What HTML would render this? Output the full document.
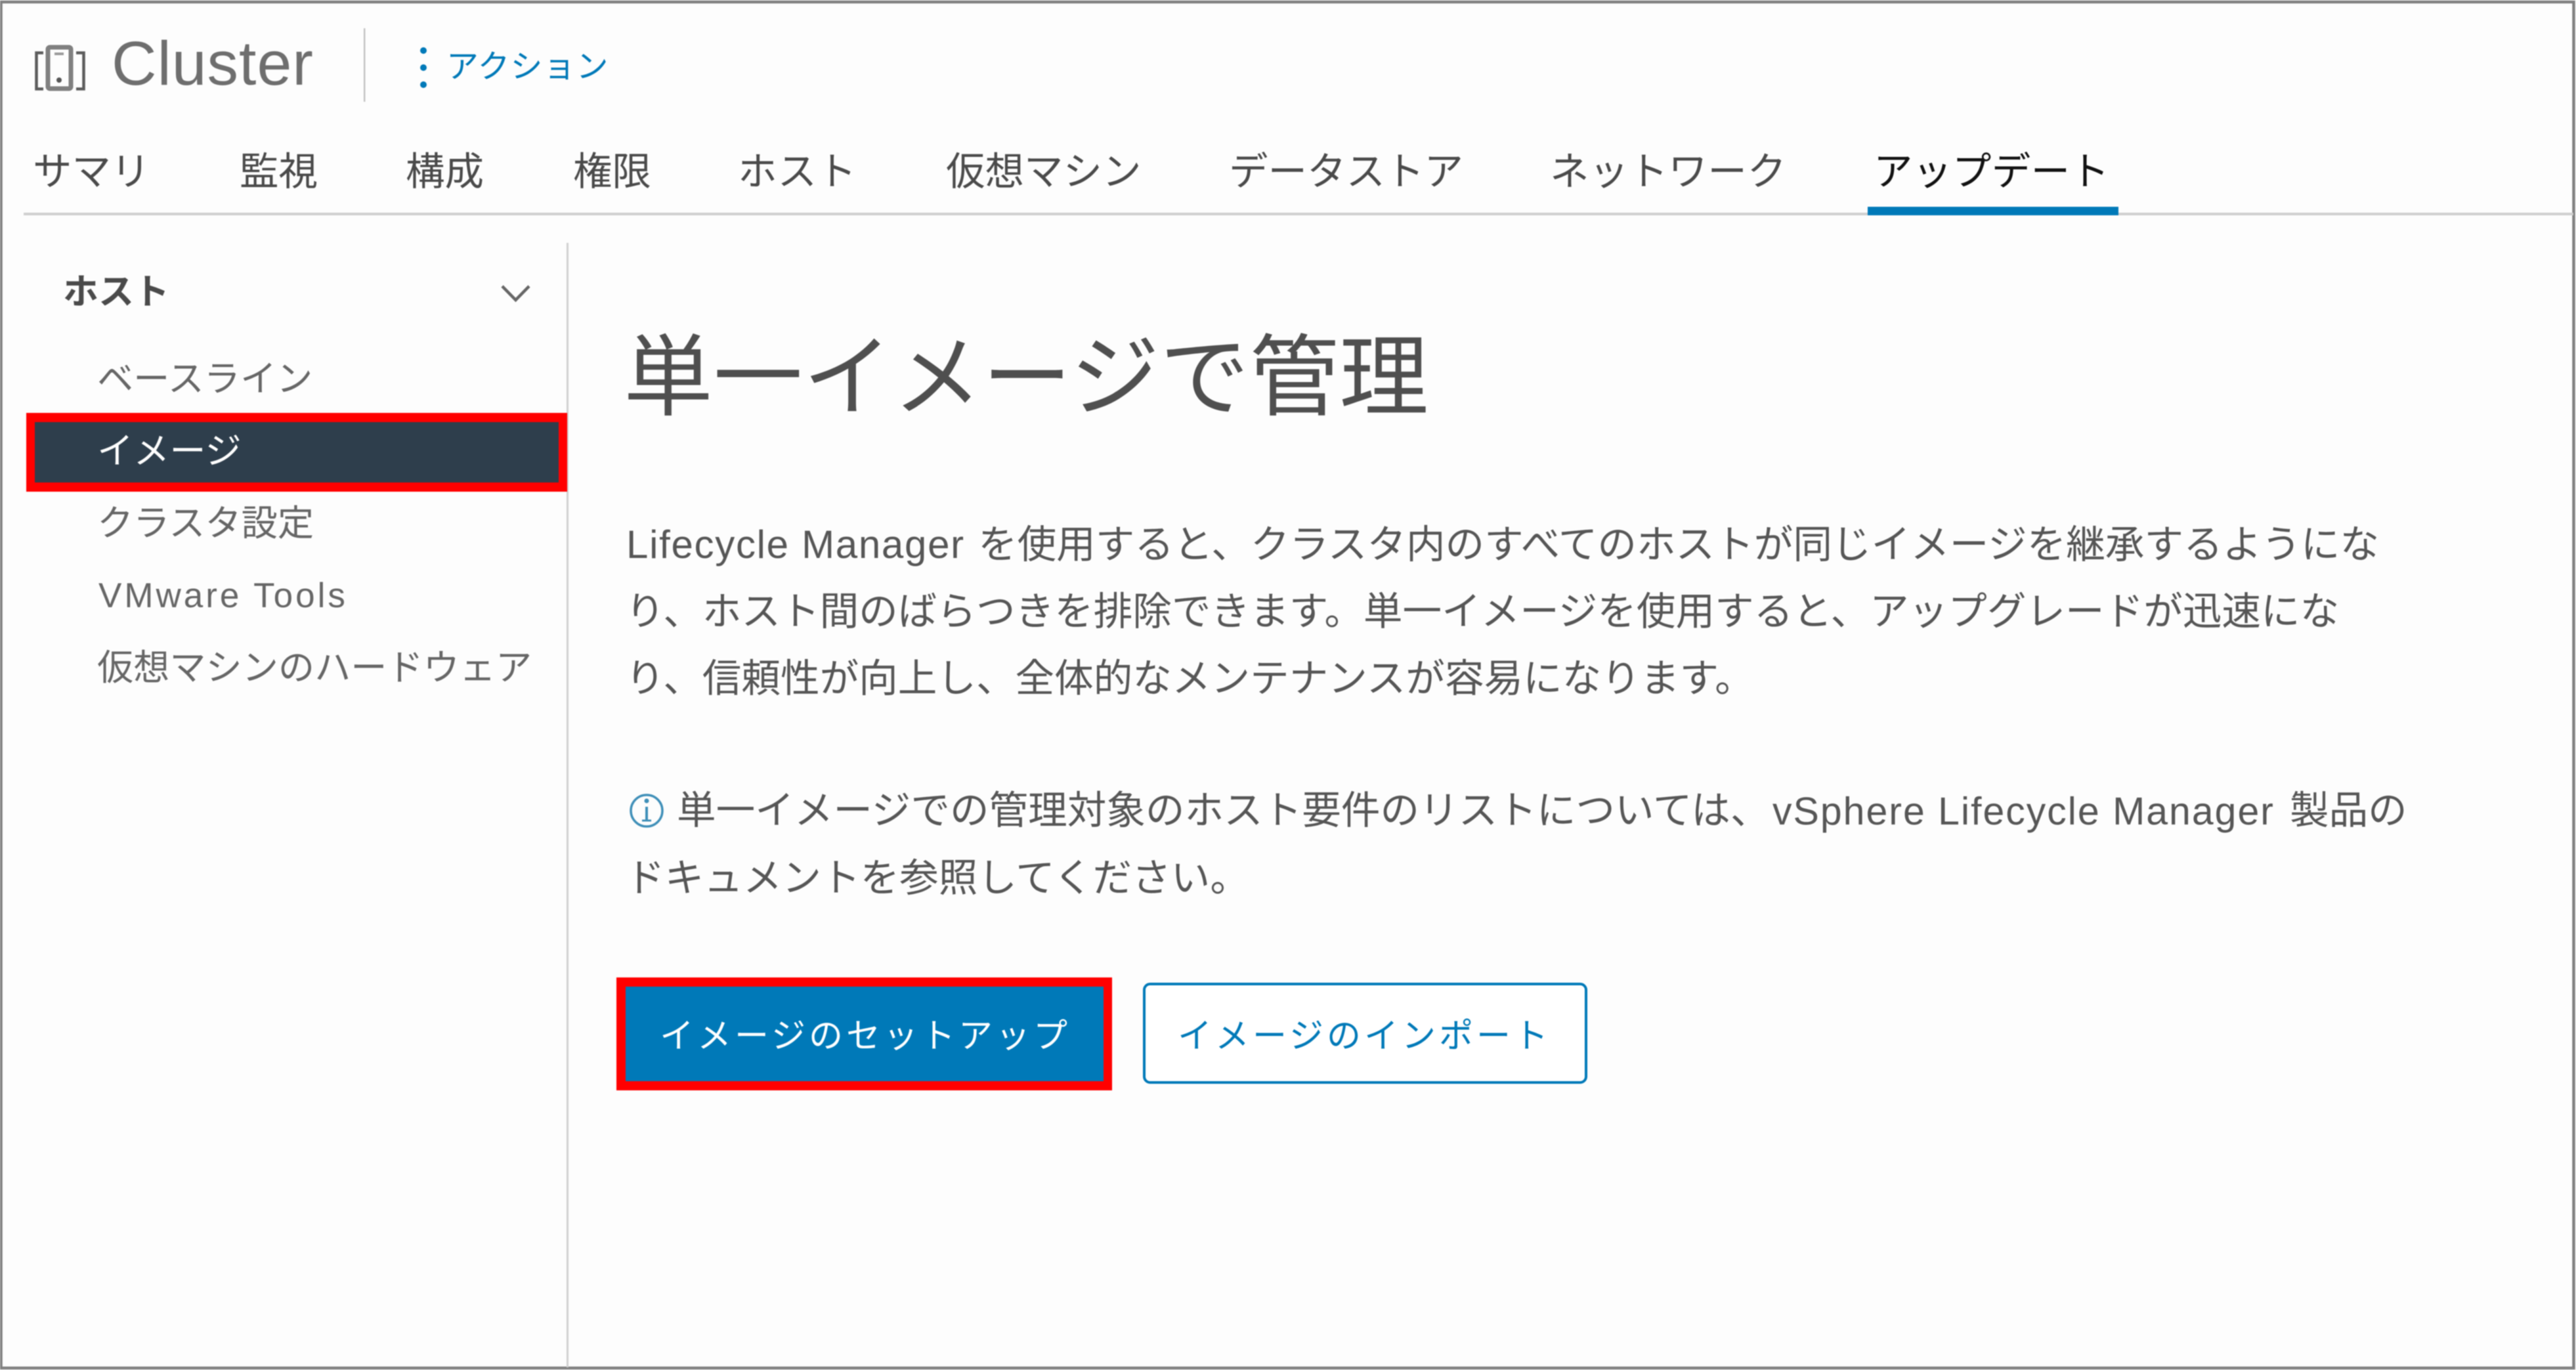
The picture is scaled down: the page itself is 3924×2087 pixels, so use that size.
<!DOCTYPE html>
<html lang="ja"><head><meta charset="utf-8"><title>Cluster</title>
<style>
html,body{margin:0;padding:0;background:#fdfdfd;width:3924px;height:2087px;overflow:hidden}
svg{display:block;filter:blur(.7px)}
text{font-family:"Liberation Sans","Noto Sans CJK JP",sans-serif;fill:#565656;white-space:pre}
.t{font-size:59.5px;fill:#4a4a4a}
.s{font-size:55.2px;fill:#666}
.p{font-size:59.6px;fill:#565656}
</style></head><body>
<svg width="3924" height="2087" viewBox="0 0 3924 2087" xmlns="http://www.w3.org/2000/svg">
<rect x="0" y="0" width="3924" height="2087" fill="#fdfdfd"/>
<rect x="1.5" y="3" width="3919" height="2081" fill="none" stroke="#808080" stroke-width="4.5"/>

<!-- cluster icon -->
<g fill="none" stroke="#5c5c5c">
<path d="M66 80.500H55.500V135.500H66" stroke-width="4.500"/>
<path d="M116 80.500H127.500V135.500H116" stroke-width="4.500"/>
<rect x="73" y="72" width="35" height="63" rx="3" stroke-width="7" stroke="#808080"/>
</g>
<rect x="83" y="80" width="14" height="4" fill="#999"/>
<circle cx="90" cy="122" r="4" fill="#555"/>

<text x="170" y="129" font-size="95" style="fill:#6e6e6e;letter-spacing:1px">Cluster</text>
<rect x="554" y="43" width="2.500" height="112" fill="#c4c4c4"/>
<g fill="#0079b8"><circle cx="645" cy="77" r="5"/><circle cx="645" cy="103" r="5"/><circle cx="645" cy="129" r="5"/></g>
<text x="680" y="118" font-size="49" style="fill:#0079b8;letter-spacing:1px">アクション</text>

<!-- tabs -->
<text class="t" x="50" y="282">サマリ</text>
<text class="t" x="365" y="282">監視</text>
<text class="t" x="618" y="282">構成</text>
<text class="t" x="873" y="282">権限</text>
<text class="t" x="1124" y="282" style="letter-spacing:1px">ホスト</text>
<text class="t" x="1441" y="282">仮想マシン</text>
<text class="t" x="1872" y="282">データストア</text>
<text class="t" x="2361" y="282" style="letter-spacing:.6px">ネットワーク</text>
<text class="t" x="2854" y="282" style="fill:#111;letter-spacing:.4px">アップデート</text>
<rect x="36" y="324" width="3884" height="4" fill="#cfcfcf"/>
<rect x="2845" y="315" width="382" height="13" fill="#0079b8"/>

<!-- sidebar -->
<rect x="863" y="370" width="3" height="1713" fill="#d0d0d0"/>
<text x="96" y="463" font-size="54" font-weight="700" style="fill:#4a4a4a">ホスト</text>
<path d="M765 436L785.500 457L806 436" fill="none" stroke="#666" stroke-width="4.500"/>
<text class="s" x="148" y="596">ベースライン</text>
<rect x="40" y="629" width="824" height="120" fill="#ff0000"/>
<rect x="53" y="643" width="798" height="92" fill="#2e3e4c"/>
<text class="s" x="148" y="706" style="fill:#fff">イメージ</text>
<text class="s" x="148" y="816">クラスタ設定</text>
<text x="150" y="925" font-size="53" style="fill:#666;letter-spacing:4px">VMware Tools</text>
<text class="s" x="148" y="1036">仮想マシンのハードウェア</text>

<!-- main -->
<text x="950" y="622" font-size="136" style="fill:#4f4f4f;letter-spacing:.6px">単一イメージで管理</text>

<text class="p" y="850"><tspan x="954" font-size="60" style="letter-spacing:1.700px">Lifecycle Manager</tspan><tspan x="1490">を使用すると、クラスタ内のすべてのホストが同じイメージを継承するようにな</tspan></text>
<text class="p" x="953" y="952">り、ホスト間のばらつきを排除できます。単一イメージを使用すると、アップグレードが迅速にな</text>
<text class="p" x="953" y="1054">り、信頼性が向上し、全体的なメンテナンスが容易になります。</text>

<g fill="none" stroke="#3f8fb8"><circle cx="985" cy="1235" r="24" stroke-width="3.500"/><path d="M985 1229V1250" stroke-width="4"/><path d="M978 1250H992" stroke-width="3"/></g>
<circle cx="985" cy="1220" r="3.500" fill="#3f8fb8"/>
<text class="p" y="1255"><tspan x="1031">単一イメージでの管理対象のホスト要件のリストについては、</tspan><tspan x="2700" y="1256" font-size="59" style="letter-spacing:2px">vSphere Lifecycle Manager</tspan><tspan x="3488" y="1255">製品の</tspan></text>
<text class="p" x="953" y="1358">ドキュメントを参照してください。</text>

<!-- buttons -->
<rect x="939" y="1489" width="755" height="172" fill="#ff0000"/>
<rect x="953" y="1503" width="728" height="144" fill="#0079b8"/>
<text x="1005" y="1596" font-size="52" style="fill:#fff;letter-spacing:5px">イメージのセットアップ</text>
<rect x="1743" y="1499" width="673" height="150" rx="9" fill="#fff" stroke="#0079b8" stroke-width="4"/>
<text x="1794" y="1596" font-size="52" style="fill:#0079b8;letter-spacing:5px">イメージのインポート</text>
</svg>
</body></html>
